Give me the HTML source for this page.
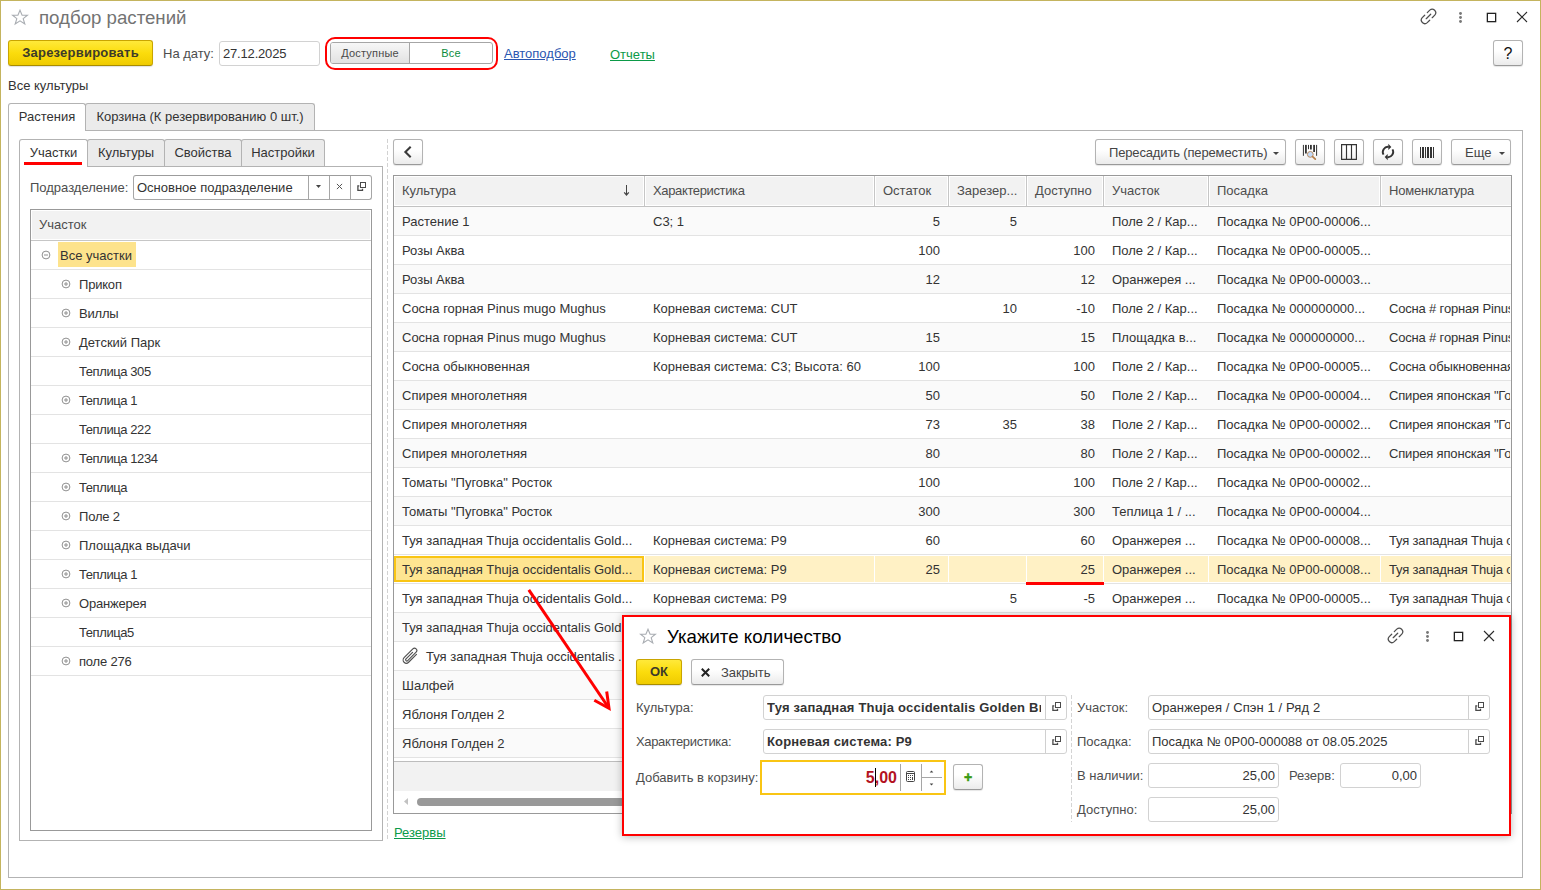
<!DOCTYPE html>
<html lang="ru"><head><meta charset="utf-8"><title>подбор растений</title>
<style>
*{box-sizing:border-box;margin:0;padding:0}
html,body{width:1541px;height:890px;overflow:hidden;background:#fff}
body{position:relative;font-family:"Liberation Sans",sans-serif;font-size:13px;color:#333;line-height:15px}
.a{position:absolute;white-space:nowrap}
.win{left:0;top:0;width:1541px;height:890px;border:1px solid #c4b45e}
.ttl{font-size:18.667px;line-height:22px}
.btn{border:1px solid #b3b3b3;border-bottom-color:#999;border-radius:3px;background:linear-gradient(#fff 0%,#fff 40%,#ebebeb 100%);box-shadow:0 1px 1px rgba(0,0,0,.10);height:26px;line-height:25px;text-align:center;color:#444}
.ybtn{border:1px solid #c9a500;border-bottom-color:#a88c00;border-radius:3px;background:linear-gradient(#ffe93a 0%,#fbdc0c 50%,#efcb00 100%);box-shadow:0 1px 1px rgba(0,0,0,.12);height:26px;line-height:24px;text-align:center;color:#3d3a2a;font-weight:bold}
.inp{border:1px solid #d2d2d2;border-radius:3px;background:#fff;height:25px;line-height:23px;padding-left:3px;color:#333;overflow:hidden}
.lbl{color:#4d4d4d;line-height:15px}
.lnk{text-decoration:underline}
.tab{border:1px solid #b3b3b3;border-bottom:none;border-radius:3px 3px 0 0;background:#ebebeb;height:27px;line-height:26px;text-align:center;color:#333}
.tab.on{background:#fff;height:28px}
.pane{border:1px solid #b3b3b3}
.hd{background:#f2f2f2;color:#4d4d4d;line-height:27px;height:28px;padding-left:7px;overflow:hidden}
.row{left:0;height:29px;line-height:29px;border-bottom:1px solid #e3e3e3}
.c{position:absolute;top:0;height:28px;line-height:29px;white-space:nowrap;overflow:hidden}
.r{text-align:right}
</style></head>
<body>
<div class="a win"></div>
<svg class="a" style="left:11px;top:9px" width="18" height="17" viewBox="0 0 18 17"><path d="M9 1.2l2.1 5h5.3l-4.2 3.4 1.6 5.4L9 11.9 4.2 15l1.6-5.4L1.6 6.2h5.3z" fill="none" stroke="#a9adb2" stroke-width="1.1" stroke-linejoin="miter"/></svg>
<div class="a ttl" style="left:39px;top:7px;color:#737373">подбор растений</div>
<svg class="a" style="left:1416px;top:4px" width="24" height="24" viewBox="0 0 24 24" fill="none" stroke="#4d4d4d" stroke-width="1.25" stroke-linecap="round"><path d="M11.300 8.600L13.760 6.140A3.540 3.540 0 0 1 18.760 11.140L16.200 13.700"/><path d="M8.700 11.200L6.250 13.650A3.540 3.540 0 0 0 11.250 18.650L13.700 16.200"/><path d="M10.200 14.700L14.700 10.200"/></svg>
<svg class="a" style="left:1458px;top:11px" width="5" height="13" viewBox="0 0 5 13" fill="#787878"><circle cx="2.500" cy="2.500" r="1.450"/><circle cx="2.500" cy="6.500" r="1.450"/><circle cx="2.500" cy="10.500" r="1.450"/></svg>
<div class="a" style="left:1487px;top:13px;width:9px;height:9px;border:1px solid #222;box-shadow:0 0 0 .3px #222"></div>
<svg class="a" style="left:1516px;top:11px" width="12" height="12" viewBox="0 0 12 12" stroke="#2a2a2a" stroke-width="1.100" fill="none"><path d="M1 1l10 10M11 1L1 11"/></svg>
<div class="a ybtn" style="left:8px;top:40px;width:145px;letter-spacing:.23px">Зарезервировать</div>
<div class="a lbl" style="left:163px;top:46px">На дату:</div>
<div class="a inp" style="left:219px;top:41px;width:101px;letter-spacing:-.18px">27.12.2025</div>
<div class="a" style="left:325px;top:37px;width:173px;height:33px;border:2px solid #ff0000;border-radius:10px"></div>
<div class="a" style="left:330px;top:42px;width:163px;height:22px;border:1px solid #a6a6a6;border-radius:3px;background:#fff;overflow:hidden;font-size:11px;line-height:20px"><div class="a" style="left:0;top:0;width:79px;height:20px;background:linear-gradient(#f7f7f7,#e2e2e2);border-right:1px solid #a6a6a6;text-align:center;color:#4a4a4a;letter-spacing:.2px">Доступные</div><div class="a" style="left:79px;top:0;width:82px;height:20px;text-align:center;color:#0b8c3c;letter-spacing:.2px">Все</div></div>
<div class="a lnk" style="left:504px;top:46px;color:#2a56b0">Автоподбор</div>
<div class="a lnk" style="left:610px;top:47px;color:#0b9a48">Отчеты</div>
<div class="a btn" style="left:1493px;top:40px;width:30px;font-size:16px;line-height:25px;color:#111">?</div>
<div class="a" style="left:8px;top:78px">Все культуры</div>
<div class="a pane" style="left:8px;top:130px;width:1515px;height:748px"></div>
<div class="a tab on" style="left:8px;top:103px;width:78px">Растения</div>
<div class="a tab" style="left:85px;top:103px;width:230px">Корзина (К резервированию 0 шт.)</div>
<div class="a pane" style="left:19px;top:166px;width:364px;height:675px"></div>
<div class="a tab on" style="left:19px;top:139px;width:69px">Участки</div>
<div class="a tab" style="left:87px;top:139px;width:78px">Культуры</div>
<div class="a tab" style="left:164px;top:139px;width:78px">Свойства</div>
<div class="a tab" style="left:241px;top:139px;width:84px">Настройки</div>
<div class="a" style="left:24px;top:162px;width:58px;height:3px;background:#ff0000"></div>
<div class="a lbl" style="left:30px;top:180px">Подразделение:</div>
<div class="a inp" style="left:133px;top:175px;width:239px;border-color:#9c9c9c #a6a6a6 #a6a6a6 #a6a6a6">Основное подразделение<div class="a" style="left:174px;top:0;width:1px;height:23px;background:#a6a6a6"></div><div class="a" style="left:195px;top:0;width:1px;height:23px;background:#a6a6a6"></div><div class="a" style="left:216px;top:0;width:1px;height:23px;background:#a6a6a6"></div><svg class="a" style="left:182px;top:9px" width="5" height="3" viewBox="0 0 5 3"><path d="M0 0h5L2.500 3z" fill="#444"/></svg><svg class="a" style="left:202px;top:7px" width="7" height="7" viewBox="0 0 7 7" stroke="#555" stroke-width="1" fill="none"><path d="M.9.900l5.200 5.200M6.100.900L.9 6.100"/></svg><svg class="a" style="left:223px;top:6px" width="10" height="10" viewBox="0 0 10 10" fill="none" stroke="#4a4a4a"><rect x="3.500" y=".5" width="5" height="5" stroke-width="1"/><path d="M2.300 3.800H.9V8.300H5.500V6.800" stroke-width="1.300"/></svg></div>
<div class="a" style="left:30px;top:209px;width:342px;height:622px;border:1px solid #999;background:#fff">
<div class="a hd" style="left:1px;top:1px;width:338px;height:28px;line-height:28px">Участок</div><div class="a" style="left:0;top:30px;width:340px;height:1px;background:#c6c6c6"></div>
<div class="a row" style="top:31px;width:340px"><svg class="a" style="left:10px;top:9px" width="10" height="10" viewBox="0 0 10 10" fill="none" stroke="#909090" stroke-width="1"><circle cx="5" cy="5" r="3.900"/><path d="M3 5h4"/></svg><div class="a" style="left:27px;top:1px;width:78px;height:25px;background:#fde38c;line-height:27px;padding-left:2px">Все участки</div></div>
<div class="a row" style="top:60px;width:340px"><svg class="a" style="left:30px;top:9px" width="10" height="10" viewBox="0 0 10 10" fill="none" stroke="#909090" stroke-width="1"><circle cx="5" cy="5" r="3.900"/><path d="M3 5h4M5 3v4"/></svg><div class="a" style="left:48px;top:0;line-height:29px;letter-spacing:-.2px">Прикоп</div></div>
<div class="a row" style="top:89px;width:340px"><svg class="a" style="left:30px;top:9px" width="10" height="10" viewBox="0 0 10 10" fill="none" stroke="#909090" stroke-width="1"><circle cx="5" cy="5" r="3.900"/><path d="M3 5h4M5 3v4"/></svg><div class="a" style="left:48px;top:0;line-height:29px;letter-spacing:-.2px">Виллы</div></div>
<div class="a row" style="top:118px;width:340px"><svg class="a" style="left:30px;top:9px" width="10" height="10" viewBox="0 0 10 10" fill="none" stroke="#909090" stroke-width="1"><circle cx="5" cy="5" r="3.900"/><path d="M3 5h4M5 3v4"/></svg><div class="a" style="left:48px;top:0;line-height:29px;letter-spacing:0px">Детский Парк</div></div>
<div class="a row" style="top:147px;width:340px"><div class="a" style="left:48px;top:0;line-height:29px;letter-spacing:-.42px">Теплица 305</div></div>
<div class="a row" style="top:176px;width:340px"><svg class="a" style="left:30px;top:9px" width="10" height="10" viewBox="0 0 10 10" fill="none" stroke="#909090" stroke-width="1"><circle cx="5" cy="5" r="3.900"/><path d="M3 5h4M5 3v4"/></svg><div class="a" style="left:48px;top:0;line-height:29px;letter-spacing:-.42px">Теплица 1</div></div>
<div class="a row" style="top:205px;width:340px"><div class="a" style="left:48px;top:0;line-height:29px;letter-spacing:-.42px">Теплица 222</div></div>
<div class="a row" style="top:234px;width:340px"><svg class="a" style="left:30px;top:9px" width="10" height="10" viewBox="0 0 10 10" fill="none" stroke="#909090" stroke-width="1"><circle cx="5" cy="5" r="3.900"/><path d="M3 5h4M5 3v4"/></svg><div class="a" style="left:48px;top:0;line-height:29px;letter-spacing:-.42px">Теплица 1234</div></div>
<div class="a row" style="top:263px;width:340px"><svg class="a" style="left:30px;top:9px" width="10" height="10" viewBox="0 0 10 10" fill="none" stroke="#909090" stroke-width="1"><circle cx="5" cy="5" r="3.900"/><path d="M3 5h4M5 3v4"/></svg><div class="a" style="left:48px;top:0;line-height:29px;letter-spacing:-.42px">Теплица</div></div>
<div class="a row" style="top:292px;width:340px"><svg class="a" style="left:30px;top:9px" width="10" height="10" viewBox="0 0 10 10" fill="none" stroke="#909090" stroke-width="1"><circle cx="5" cy="5" r="3.900"/><path d="M3 5h4M5 3v4"/></svg><div class="a" style="left:48px;top:0;line-height:29px;letter-spacing:-.2px">Поле 2</div></div>
<div class="a row" style="top:321px;width:340px"><svg class="a" style="left:30px;top:9px" width="10" height="10" viewBox="0 0 10 10" fill="none" stroke="#909090" stroke-width="1"><circle cx="5" cy="5" r="3.900"/><path d="M3 5h4M5 3v4"/></svg><div class="a" style="left:48px;top:0;line-height:29px;letter-spacing:0px">Площадка выдачи</div></div>
<div class="a row" style="top:350px;width:340px"><svg class="a" style="left:30px;top:9px" width="10" height="10" viewBox="0 0 10 10" fill="none" stroke="#909090" stroke-width="1"><circle cx="5" cy="5" r="3.900"/><path d="M3 5h4M5 3v4"/></svg><div class="a" style="left:48px;top:0;line-height:29px;letter-spacing:-.42px">Теплица 1</div></div>
<div class="a row" style="top:379px;width:340px"><svg class="a" style="left:30px;top:9px" width="10" height="10" viewBox="0 0 10 10" fill="none" stroke="#909090" stroke-width="1"><circle cx="5" cy="5" r="3.900"/><path d="M3 5h4M5 3v4"/></svg><div class="a" style="left:48px;top:0;line-height:29px;letter-spacing:-.2px">Оранжерея</div></div>
<div class="a row" style="top:408px;width:340px"><div class="a" style="left:48px;top:0;line-height:29px;letter-spacing:-.42px">Теплица5</div></div>
<div class="a row" style="top:437px;width:340px"><svg class="a" style="left:30px;top:9px" width="10" height="10" viewBox="0 0 10 10" fill="none" stroke="#909090" stroke-width="1"><circle cx="5" cy="5" r="3.900"/><path d="M3 5h4M5 3v4"/></svg><div class="a" style="left:48px;top:0;line-height:29px;letter-spacing:-.2px">поле 276</div></div>
</div>
<div class="a" style="left:387px;top:139px;width:1px;height:701px;background:repeating-linear-gradient(180deg,#d2d2d2 0,#d2d2d2 4px,transparent 4px,transparent 6px)"></div>
<div class="a btn" style="left:393px;top:139px;width:30px"><svg class="a" style="left:0;top:0" width="28" height="24" viewBox="0 0 28 24" fill="none" stroke="#3a3a3a" stroke-width="2.100"><path d="M16.700 6.800L11.400 12l5.300 5.200"/></svg></div>
<div class="a btn" style="left:1095px;top:139px;width:191px;text-align:left;padding-left:13px;letter-spacing:-.15px">Пересадить (переместить)<svg class="a" style="left:177px;top:12px" width="6" height="3" viewBox="0 0 6 3"><path d="M0 0h6L3 3z" fill="#444"/></svg></div>
<div class="a btn" style="left:1295px;top:139px;width:30px"><svg class="a" style="left:0;top:0" width="28" height="24" viewBox="0 0 28 24"><g fill="#333"><rect x="6.900" y="4.900" width="1" height="10.900"/><rect x="9" y="4.900" width="1.800" height="8.600"/><rect x="12" y="4.900" width="1" height="4.300"/><rect x="14" y="4.900" width="1.800" height="4.600"/><rect x="17.200" y="4.900" width="1.800" height="7.100"/><rect x="20.100" y="4.900" width="1" height="10.900"/></g><circle cx="14.300" cy="14.400" r="2.900" fill="#c3daf8" stroke="#b98d62" stroke-width="1"/><path d="M16.600 16.700l2.700 2.500" stroke="#b57f4a" stroke-width="1.700" stroke-linecap="round"/></svg></div>
<div class="a btn" style="left:1334px;top:139px;width:30px"><svg class="a" style="left:0;top:0" width="28" height="24" viewBox="0 0 28 24" fill="none" stroke="#333" stroke-width="1.150"><path d="M6.600 4.600h14.800v14.800H6.600zM11.500 4.600v14.800M16.500 4.600v14.800"/></svg></div>
<div class="a btn" style="left:1373px;top:139px;width:30px"><svg class="a" style="left:0;top:0" width="28" height="24" viewBox="0 0 28 24" fill="none" stroke="#333" stroke-width="1.900"><path d="M9.500 14.600A5.200 5.200 0 0 1 14.600 6.850"/><path d="M18.500 9.400A5.200 5.200 0 0 1 13.400 17.150"/><path d="M14.300 3.700L17.300 6.900 14.300 10z" fill="#333" stroke="none"/><path d="M13.700 14L10.700 17.100 13.700 20.300z" fill="#333" stroke="none"/></svg></div>
<div class="a btn" style="left:1412px;top:139px;width:30px"><svg class="a" style="left:0;top:0" width="28" height="24" viewBox="0 0 28 24" fill="#333"><rect x="7" y="7" width="1" height="11"/><rect x="9" y="7" width="2" height="11"/><rect x="12" y="7" width="1" height="11"/><rect x="14" y="7" width="2" height="11"/><rect x="17" y="7" width="2" height="11"/><rect x="20" y="7" width="1" height="11"/></svg></div>
<div class="a btn" style="left:1451px;top:139px;width:60px;text-align:left;padding-left:13px">Еще<svg class="a" style="left:47px;top:12px" width="6" height="3" viewBox="0 0 6 3"><path d="M0 0h6L3 3z" fill="#444"/></svg></div>
<div class="a" style="left:393px;top:175px;width:1119px;height:639px;border:1px solid #999;background:#fff;overflow:hidden">
<div class="a" style="left:1px;top:1px;width:1116px;height:28px;background:#f2f2f2"></div><div class="a" style="left:0;top:30px;width:1117px;height:1px;background:#c2c2c2"></div>
<div class="a" style="left:0px;top:1px;width:250px;height:29px;line-height:28px;padding-left:8px;color:#4d4d4d;overflow:hidden">Культура</div><div class="a" style="left:249px;top:1px;width:3px;height:28px;background:#fff"></div><div class="a" style="left:250px;top:0;width:1px;height:30px;background:#c6c6c6"></div><div class="a" style="left:251px;top:1px;width:229px;height:29px;line-height:28px;padding-left:8px;color:#4d4d4d;overflow:hidden;letter-spacing:-.36px">Характеристика</div><div class="a" style="left:479px;top:1px;width:3px;height:28px;background:#fff"></div><div class="a" style="left:480px;top:0;width:1px;height:30px;background:#c6c6c6"></div><div class="a" style="left:481px;top:1px;width:73px;height:29px;line-height:28px;padding-left:8px;color:#4d4d4d;overflow:hidden">Остаток</div><div class="a" style="left:553px;top:1px;width:3px;height:28px;background:#fff"></div><div class="a" style="left:554px;top:0;width:1px;height:30px;background:#c6c6c6"></div><div class="a" style="left:555px;top:1px;width:77px;height:29px;line-height:28px;padding-left:8px;color:#4d4d4d;overflow:hidden">Зарезер...</div><div class="a" style="left:631px;top:1px;width:3px;height:28px;background:#fff"></div><div class="a" style="left:632px;top:0;width:1px;height:30px;background:#c6c6c6"></div><div class="a" style="left:633px;top:1px;width:76px;height:29px;line-height:28px;padding-left:8px;color:#4d4d4d;overflow:hidden">Доступно</div><div class="a" style="left:708px;top:1px;width:3px;height:28px;background:#fff"></div><div class="a" style="left:709px;top:0;width:1px;height:30px;background:#c6c6c6"></div><div class="a" style="left:710px;top:1px;width:104px;height:29px;line-height:28px;padding-left:8px;color:#4d4d4d;overflow:hidden">Участок</div><div class="a" style="left:813px;top:1px;width:3px;height:28px;background:#fff"></div><div class="a" style="left:814px;top:0;width:1px;height:30px;background:#c6c6c6"></div><div class="a" style="left:815px;top:1px;width:171px;height:29px;line-height:28px;padding-left:8px;color:#4d4d4d;overflow:hidden">Посадка</div><div class="a" style="left:985px;top:1px;width:3px;height:28px;background:#fff"></div><div class="a" style="left:986px;top:0;width:1px;height:30px;background:#c6c6c6"></div><div class="a" style="left:987px;top:1px;width:129px;height:29px;line-height:28px;padding-left:8px;color:#4d4d4d;overflow:hidden;letter-spacing:-.18px">Номенклатура</div><svg class="a" style="left:228px;top:8px" width="9" height="12" viewBox="0 0 9 12" fill="none" stroke="#444" stroke-width="1"><path d="M4.500 1v10"/><path d="M2.200 8.300L4.500 11l2.300-2.700" stroke-width="1.200"/></svg>
<div class="a row" style="top:31px;width:1117px;background:#fafafa"><div class="c" style="left:0px;width:250px;padding-left:8px">Растение 1</div><div class="c" style="left:251px;width:229px;padding-left:8px">C3; 1</div><div class="c" style="left:481px;width:73px;text-align:right;padding-right:8px">5</div><div class="c" style="left:555px;width:77px;text-align:right;padding-right:9px">5</div><div class="c" style="left:710px;width:104px;padding-left:8px">Поле 2 / Кар...</div><div class="c" style="left:815px;width:171px;padding-left:8px">Посадка № 0Р00-00006...</div></div>
<div class="a row" style="top:60px;width:1117px;background:#fff"><div class="c" style="left:0px;width:250px;padding-left:8px">Розы Аква</div><div class="c" style="left:481px;width:73px;text-align:right;padding-right:8px">100</div><div class="c" style="left:633px;width:76px;text-align:right;padding-right:8px">100</div><div class="c" style="left:710px;width:104px;padding-left:8px">Поле 2 / Кар...</div><div class="c" style="left:815px;width:171px;padding-left:8px">Посадка № 0Р00-00005...</div></div>
<div class="a row" style="top:89px;width:1117px;background:#fafafa"><div class="c" style="left:0px;width:250px;padding-left:8px">Розы Аква</div><div class="c" style="left:481px;width:73px;text-align:right;padding-right:8px">12</div><div class="c" style="left:633px;width:76px;text-align:right;padding-right:8px">12</div><div class="c" style="left:710px;width:104px;padding-left:8px">Оранжерея ...</div><div class="c" style="left:815px;width:171px;padding-left:8px">Посадка № 0Р00-00003...</div></div>
<div class="a row" style="top:118px;width:1117px;background:#fff"><div class="c" style="left:0px;width:250px;padding-left:8px">Сосна горная Pinus mugo Mughus</div><div class="c" style="left:251px;width:229px;padding-left:8px">Корневая система: CUT</div><div class="c" style="left:555px;width:77px;text-align:right;padding-right:9px">10</div><div class="c" style="left:633px;width:76px;text-align:right;padding-right:8px">-10</div><div class="c" style="left:710px;width:104px;padding-left:8px">Поле 2 / Кар...</div><div class="c" style="left:815px;width:171px;padding-left:8px">Посадка № 000000000...</div><div class="c" style="left:987px;width:129px;padding-left:8px;letter-spacing:-.17px">Сосна # горная Pinus mugo</div></div>
<div class="a row" style="top:147px;width:1117px;background:#fafafa"><div class="c" style="left:0px;width:250px;padding-left:8px">Сосна горная Pinus mugo Mughus</div><div class="c" style="left:251px;width:229px;padding-left:8px">Корневая система: CUT</div><div class="c" style="left:481px;width:73px;text-align:right;padding-right:8px">15</div><div class="c" style="left:633px;width:76px;text-align:right;padding-right:8px">15</div><div class="c" style="left:710px;width:104px;padding-left:8px">Площадка в...</div><div class="c" style="left:815px;width:171px;padding-left:8px">Посадка № 000000000...</div><div class="c" style="left:987px;width:129px;padding-left:8px;letter-spacing:-.17px">Сосна # горная Pinus mugo</div></div>
<div class="a row" style="top:176px;width:1117px;background:#fff"><div class="c" style="left:0px;width:250px;padding-left:8px">Сосна обыкновенная</div><div class="c" style="left:251px;width:229px;padding-left:8px">Корневая система: C3; Высота: 60</div><div class="c" style="left:481px;width:73px;text-align:right;padding-right:8px">100</div><div class="c" style="left:633px;width:76px;text-align:right;padding-right:8px">100</div><div class="c" style="left:710px;width:104px;padding-left:8px">Поле 2 / Кар...</div><div class="c" style="left:815px;width:171px;padding-left:8px">Посадка № 0Р00-00005...</div><div class="c" style="left:987px;width:129px;padding-left:8px;letter-spacing:-.17px">Сосна обыкновенная</div></div>
<div class="a row" style="top:205px;width:1117px;background:#fafafa"><div class="c" style="left:0px;width:250px;padding-left:8px">Спирея многолетняя</div><div class="c" style="left:481px;width:73px;text-align:right;padding-right:8px">50</div><div class="c" style="left:633px;width:76px;text-align:right;padding-right:8px">50</div><div class="c" style="left:710px;width:104px;padding-left:8px">Поле 2 / Кар...</div><div class="c" style="left:815px;width:171px;padding-left:8px">Посадка № 0Р00-00004...</div><div class="c" style="left:987px;width:129px;padding-left:8px;letter-spacing:-.17px">Спирея японская &quot;Голд</div></div>
<div class="a row" style="top:234px;width:1117px;background:#fff"><div class="c" style="left:0px;width:250px;padding-left:8px">Спирея многолетняя</div><div class="c" style="left:481px;width:73px;text-align:right;padding-right:8px">73</div><div class="c" style="left:555px;width:77px;text-align:right;padding-right:9px">35</div><div class="c" style="left:633px;width:76px;text-align:right;padding-right:8px">38</div><div class="c" style="left:710px;width:104px;padding-left:8px">Поле 2 / Кар...</div><div class="c" style="left:815px;width:171px;padding-left:8px">Посадка № 0Р00-00002...</div><div class="c" style="left:987px;width:129px;padding-left:8px;letter-spacing:-.17px">Спирея японская &quot;Голд</div></div>
<div class="a row" style="top:263px;width:1117px;background:#fafafa"><div class="c" style="left:0px;width:250px;padding-left:8px">Спирея многолетняя</div><div class="c" style="left:481px;width:73px;text-align:right;padding-right:8px">80</div><div class="c" style="left:633px;width:76px;text-align:right;padding-right:8px">80</div><div class="c" style="left:710px;width:104px;padding-left:8px">Поле 2 / Кар...</div><div class="c" style="left:815px;width:171px;padding-left:8px">Посадка № 0Р00-00002...</div><div class="c" style="left:987px;width:129px;padding-left:8px;letter-spacing:-.17px">Спирея японская &quot;Голд</div></div>
<div class="a row" style="top:292px;width:1117px;background:#fff"><div class="c" style="left:0px;width:250px;padding-left:8px">Томаты &quot;Пуговка&quot; Росток</div><div class="c" style="left:481px;width:73px;text-align:right;padding-right:8px">100</div><div class="c" style="left:633px;width:76px;text-align:right;padding-right:8px">100</div><div class="c" style="left:710px;width:104px;padding-left:8px">Поле 2 / Кар...</div><div class="c" style="left:815px;width:171px;padding-left:8px">Посадка № 0Р00-00002...</div></div>
<div class="a row" style="top:321px;width:1117px;background:#fafafa"><div class="c" style="left:0px;width:250px;padding-left:8px">Томаты &quot;Пуговка&quot; Росток</div><div class="c" style="left:481px;width:73px;text-align:right;padding-right:8px">300</div><div class="c" style="left:633px;width:76px;text-align:right;padding-right:8px">300</div><div class="c" style="left:710px;width:104px;padding-left:8px">Теплица 1 / ...</div><div class="c" style="left:815px;width:171px;padding-left:8px">Посадка № 0Р00-00004...</div></div>
<div class="a row" style="top:350px;width:1117px;background:#fff"><div class="c" style="left:0px;width:250px;padding-left:8px">Туя западная Thuja occidentalis Gold...</div><div class="c" style="left:251px;width:229px;padding-left:8px">Корневая система: P9</div><div class="c" style="left:481px;width:73px;text-align:right;padding-right:8px">60</div><div class="c" style="left:633px;width:76px;text-align:right;padding-right:8px">60</div><div class="c" style="left:710px;width:104px;padding-left:8px">Оранжерея ...</div><div class="c" style="left:815px;width:171px;padding-left:8px">Посадка № 0Р00-00008...</div><div class="c" style="left:987px;width:129px;padding-left:8px;letter-spacing:-.17px">Туя западная Thuja occidentalis</div></div>
<div class="a row" style="top:379px;width:1117px;background:#fff"><div class="a" style="left:0;top:1px;width:1117px;height:26px;background:#fff1c5"></div><div class="a" style="left:250px;top:0;width:1px;height:28px;background:#fff"></div><div class="a" style="left:0;top:1px;width:250px;height:26px;border:2px solid #f9c514;background:#fee591"></div><div class="c" style="left:0px;width:250px;padding-left:8px">Туя западная Thuja occidentalis Gold...</div><div class="a" style="left:480px;top:0;width:1px;height:28px;background:#fff"></div><div class="c" style="left:251px;width:229px;padding-left:8px">Корневая система: P9</div><div class="a" style="left:554px;top:0;width:1px;height:28px;background:#fff"></div><div class="c" style="left:481px;width:73px;text-align:right;padding-right:8px">25</div><div class="a" style="left:632px;top:0;width:1px;height:28px;background:#fff"></div><div class="a" style="left:709px;top:0;width:1px;height:28px;background:#fff"></div><div class="c" style="left:633px;width:76px;text-align:right;padding-right:8px">25</div><div class="a" style="left:814px;top:0;width:1px;height:28px;background:#fff"></div><div class="c" style="left:710px;width:104px;padding-left:8px">Оранжерея ...</div><div class="a" style="left:986px;top:0;width:1px;height:28px;background:#fff"></div><div class="c" style="left:815px;width:171px;padding-left:8px">Посадка № 0Р00-00008...</div><div class="c" style="left:987px;width:129px;padding-left:8px;letter-spacing:-.17px">Туя западная Thuja occidentalis</div></div>
<div class="a row" style="top:408px;width:1117px;background:#fff"><div class="c" style="left:0px;width:250px;padding-left:8px">Туя западная Thuja occidentalis Gold...</div><div class="c" style="left:251px;width:229px;padding-left:8px">Корневая система: P9</div><div class="c" style="left:555px;width:77px;text-align:right;padding-right:9px">5</div><div class="c" style="left:633px;width:76px;text-align:right;padding-right:8px">-5</div><div class="c" style="left:710px;width:104px;padding-left:8px">Оранжерея ...</div><div class="c" style="left:815px;width:171px;padding-left:8px">Посадка № 0Р00-00005...</div><div class="c" style="left:987px;width:129px;padding-left:8px;letter-spacing:-.17px">Туя западная Thuja occidentalis</div></div>
<div class="a row" style="top:437px;width:1117px;background:#fafafa"><div class="c" style="left:0px;width:250px;padding-left:8px">Туя западная Thuja occidentalis Gold...</div></div>
<div class="a row" style="top:466px;width:1117px;background:#fff"><svg class="a" style="left:8px;top:5px" width="18" height="18" viewBox="0 0 18 18" fill="none" stroke="#505050" stroke-width="1.150" stroke-linecap="round"><path transform="translate(6.400,6.400) rotate(-45)" d="M5 6.400L-6.100 6.400A3.200 3.200 0 0 1 -6.100 0L6.300 0A2.300 2.300 0 0 1 6.300 4.600L-5.600 4.600A1.170 1.170 0 0 1 -5.600 2.260L3.600 2.260"/></svg><div class="c" style="left:0px;width:250px;padding-left:32px">Туя западная Thuja occidentalis ...</div></div>
<div class="a row" style="top:495px;width:1117px;background:#fafafa"><div class="c" style="left:0px;width:250px;padding-left:8px">Шалфей</div></div>
<div class="a row" style="top:524px;width:1117px;background:#fff"><div class="c" style="left:0px;width:250px;padding-left:8px">Яблоня Голден 2</div></div>
<div class="a row" style="top:553px;width:1117px;background:#fafafa"><div class="c" style="left:0px;width:250px;padding-left:8px">Яблоня Голден 2</div></div>
<div class="a" style="left:0;top:585px;width:1117px;height:1px;background:#bdbdbd"></div><div class="a" style="left:0;top:586px;width:1117px;height:29px;background:#f2f2f2"></div><svg class="a" style="left:10px;top:622px" width="4" height="7" viewBox="0 0 4 7"><path d="M4 0v7L0 3.500z" fill="#c2c2c2"/></svg><div class="a" style="left:23px;top:622px;width:700px;height:8px;border-radius:4px;background:#999"></div>
</div>
<div class="a" style="left:1026px;top:582px;width:78px;height:3px;background:#ff0000"></div>
<div class="a lnk" style="left:394px;top:825px;color:#0b9a48">Резервы</div>
<svg class="a" style="left:0;top:0" width="1541" height="890" viewBox="0 0 1541 890" fill="none" stroke="#ff0000" stroke-width="3" stroke-linecap="butt"><path d="M528.800 589.800L608.500 707.500"/><path d="M594.300 700.300L609 708.300 606.700 691.500" stroke-linejoin="miter"/></svg>
<div class="a" style="left:622px;top:615px;width:889px;height:221px;border:2px solid #ff0000;background:#fff;box-shadow:0 1px 8px rgba(0,0,0,.28)">
<svg class="a" style="left:15px;top:11px" width="18" height="17" viewBox="0 0 18 17"><path d="M9 1.2l2.1 5h5.3l-4.2 3.4 1.6 5.4L9 11.9 4.2 15l1.6-5.4L1.6 6.2h5.3z" fill="none" stroke="#a9adb2" stroke-width="1.1" stroke-linejoin="miter"/></svg>
<div class="a ttl" style="left:43px;top:9px;color:#000">Укажите количество</div>
<svg class="a" style="left:759px;top:6px" width="24" height="24" viewBox="0 0 24 24" fill="none" stroke="#4d4d4d" stroke-width="1.25" stroke-linecap="round"><path d="M11.300 8.600L13.760 6.140A3.540 3.540 0 0 1 18.760 11.140L16.200 13.700"/><path d="M8.700 11.200L6.250 13.650A3.540 3.540 0 0 0 11.250 18.650L13.700 16.200"/><path d="M10.200 14.700L14.700 10.200"/></svg>
<svg class="a" style="left:801px;top:13px" width="5" height="13" viewBox="0 0 5 13" fill="#787878"><circle cx="2.500" cy="2.500" r="1.450"/><circle cx="2.500" cy="6.500" r="1.450"/><circle cx="2.500" cy="10.500" r="1.450"/></svg>
<div class="a" style="left:830px;top:15px;width:9px;height:9px;border:1px solid #222;box-shadow:0 0 0 .3px #222"></div>
<svg class="a" style="left:859px;top:13px" width="12" height="12" viewBox="0 0 12 12" stroke="#2a2a2a" stroke-width="1.100" fill="none"><path d="M1 1l10 10M11 1L1 11"/></svg>
<div class="a ybtn" style="left:12px;top:42px;width:46px;font-size:13px">ОК</div>
<div class="a btn" style="left:67px;top:42px;width:93px;text-align:left;padding-left:29px;letter-spacing:-.1px"><svg class="a" style="left:9px;top:8px" width="9" height="9" viewBox="0 0 9 9" stroke="#222" stroke-width="2"><path d="M.8.800l7.400 7.400M8.200.800L.8 8.200"/></svg>Закрыть</div>
<div class="a lbl" style="left:12px;top:83px">Культура:</div>
<div class="a lbl" style="left:12px;top:117px;letter-spacing:-.34px">Характеристика:</div>
<div class="a lbl" style="left:12px;top:153px">Добавить в корзину:</div>
<div class="a inp" style="left:139px;top:78px;width:304px;height:25px;font-weight:bold;letter-spacing:.2px"><span style="display:block;width:274px;overflow:hidden">Туя западная Thuja occidentalis Golden Brabant</span><div class="a" style="left:281px;top:0;width:1px;height:23px;background:#d0d0d0"></div><svg class="a" style="left:288px;top:6px" width="10" height="10" viewBox="0 0 10 10" fill="none" stroke="#4a4a4a"><rect x="3.500" y=".5" width="5" height="5" stroke-width="1"/><path d="M2.300 3.800H.9V8.300H5.500V6.800" stroke-width="1.300"/></svg></div>
<div class="a inp" style="left:139px;top:112px;width:304px;height:25px;font-weight:bold;letter-spacing:.17px">Корневая система: P9<div class="a" style="left:281px;top:0;width:1px;height:23px;background:#d0d0d0"></div><svg class="a" style="left:288px;top:6px" width="10" height="10" viewBox="0 0 10 10" fill="none" stroke="#4a4a4a"><rect x="3.500" y=".5" width="5" height="5" stroke-width="1"/><path d="M2.300 3.800H.9V8.300H5.500V6.800" stroke-width="1.300"/></svg></div>
<div class="a" style="left:136px;top:143px;width:186px;height:35px;border:2px solid #f9c514;background:#fff"><div class="a" style="left:0;top:0;width:135px;height:31px;line-height:32px;text-align:right;color:#b3121f;font-weight:bold;font-size:16px">5,00</div><div class="a" style="left:113px;top:6px;width:1px;height:19px;background:#000"></div><div class="a" style="left:138px;top:2px;width:1px;height:27px;background:#a6a6a6"></div><div class="a" style="left:159px;top:2px;width:1px;height:27px;background:#a6a6a6"></div><div class="a" style="left:160px;top:15px;width:20px;height:1px;background:#a6a6a6"></div><svg class="a" style="left:144px;top:9px" width="9" height="11" viewBox="0 0 9 11"><rect x=".5" y=".5" width="8" height="10" rx="1" fill="none" stroke="#444" stroke-width="1"/><g fill="#444"><rect x="1" y="2" width="7" height="1"/><rect x="2" y="4" width="1" height="1"/><rect x="4" y="4" width="1" height="1"/><rect x="6" y="4" width="1" height="1"/><rect x="2" y="6" width="1" height="1"/><rect x="4" y="6" width="1" height="1"/><rect x="2" y="8" width="1" height="1"/><rect x="4" y="8" width="1" height="1"/><rect x="6" y="6" width="1" height="3"/></g></svg><svg class="a" style="left:167px;top:8px" width="5" height="3" viewBox="0 0 5 3"><path d="M.7 2.600h3.600L2.500.400z" fill="#444"/></svg><svg class="a" style="left:167px;top:21px" width="5" height="3" viewBox="0 0 5 3"><path d="M.7.400h3.600L2.500 2.600z" fill="#444"/></svg></div>
<div class="a btn" style="left:329px;top:147px;width:30px;color:#3a9a12;font-weight:bold;font-size:14px;line-height:25px;-webkit-text-stroke:.5px #3a9a12">+</div>
<div class="a" style="left:447px;top:78px;width:1px;height:127px;background:repeating-linear-gradient(180deg,#d4d4d4 0,#d4d4d4 4px,transparent 4px,transparent 6px)"></div>
<div class="a lbl" style="left:453px;top:83px">Участок:</div>
<div class="a lbl" style="left:453px;top:117px">Посадка:</div>
<div class="a lbl" style="left:453px;top:151px">В наличии:</div>
<div class="a lbl" style="left:453px;top:185px">Доступно:</div>
<div class="a lbl" style="left:665px;top:151px">Резерв:</div>
<div class="a inp" style="left:524px;top:78px;width:342px;letter-spacing:.1px">Оранжерея / Спэн 1 / Ряд 2<div class="a" style="left:319px;top:0;width:1px;height:23px;background:#d0d0d0"></div><svg class="a" style="left:326px;top:6px" width="10" height="10" viewBox="0 0 10 10" fill="none" stroke="#4a4a4a"><rect x="3.500" y=".5" width="5" height="5" stroke-width="1"/><path d="M2.300 3.800H.9V8.300H5.500V6.800" stroke-width="1.300"/></svg></div>
<div class="a inp" style="left:524px;top:112px;width:342px">Посадка № 0Р00-000088 от 08.05.2025<div class="a" style="left:319px;top:0;width:1px;height:23px;background:#d0d0d0"></div><svg class="a" style="left:326px;top:6px" width="10" height="10" viewBox="0 0 10 10" fill="none" stroke="#4a4a4a"><rect x="3.500" y=".5" width="5" height="5" stroke-width="1"/><path d="M2.300 3.800H.9V8.300H5.500V6.800" stroke-width="1.300"/></svg></div>
<div class="a inp r" style="left:524px;top:146px;width:131px;padding-right:3px">25,00</div>
<div class="a inp r" style="left:716px;top:146px;width:81px;padding-right:3px">0,00</div>
<div class="a inp r" style="left:524px;top:180px;width:131px;padding-right:3px">25,00</div>
</div>
</body></html>
